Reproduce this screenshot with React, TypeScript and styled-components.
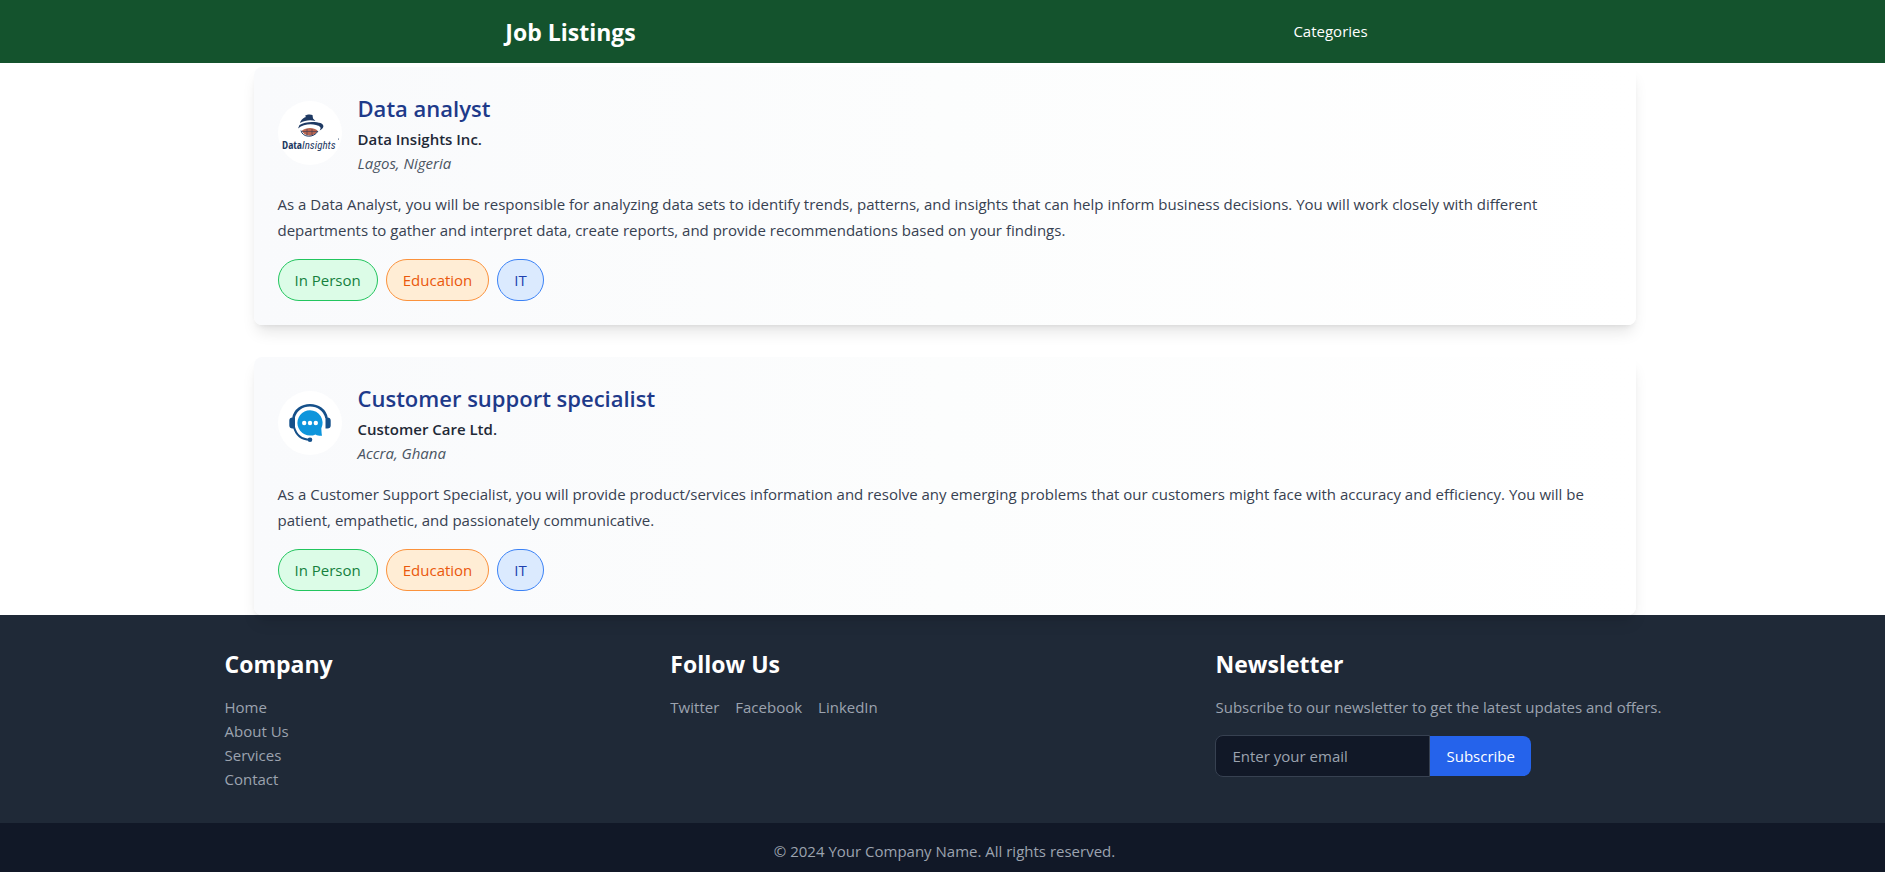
import React from 'react';
import styled, { createGlobalStyle } from 'styled-components';

const GlobalStyle = createGlobalStyle`
  *, *::before, *::after { box-sizing: border-box; }
  body {
    margin: 0;
    background: #ffffff;
    color: #111827;
    font-family: 'Segoe UI', 'Open Sans', 'Noto Sans', sans-serif;
    font-size: 15px;
    line-height: 24px;
  }
  h1, h2, h3, p, ul { margin: 0; padding: 0; }
  ul { list-style: none; }
  a { color: inherit; text-decoration: none; }
`;

const Page = styled.div`
  display: flex;
  flex-direction: column;
  min-height: 100vh;
`;

const Container = styled.div`
  width: 100%;
  max-width: 1536px;
  margin: 0 auto;
`;

const Header = styled.header`
  background: #14532d;
  color: #ffffff;
  padding: 15px 0 14px 4px;
`;

const HeaderRow = styled(Container)`
  display: flex;
  align-items: center;
  justify-content: space-around;
`;

const Brand = styled.h1`
  font-size: 23px;
  line-height: 34px;
  font-weight: 700;
`;

const Nav = styled.nav`
  padding: 0 16px 2px 0;
`;

const Main = styled.main`
  position: relative;
  z-index: 1;
  padding: 4px 0 0 4px;
`;

const JobList = styled(Container)`
  display: flex;
  flex-direction: column;
  gap: 32px;
  padding: 0 77px;
`;

const Card = styled.article`
  padding: 24px;
  border-radius: 8px;
  background: linear-gradient(to right, #f9fafc, #fcfdfd 50%, #ffffff);
  box-shadow: 0 10px 15px -3px rgba(0, 0, 0, 0.1), 0 4px 6px -4px rgba(0, 0, 0, 0.1);
`;

const CardHead = styled.div`
  display: flex;
  align-items: center;
  gap: 16px;
  margin-bottom: 16px;
`;

const Logo = styled.svg`
  flex: none;
  width: 64px;
  height: 64px;
  border-radius: 50%;
  background: #ffffff;
`;

const JobTitle = styled.h2`
  margin-bottom: 2px;
  font-size: 22px;
  line-height: 34px;
  font-weight: 600;
  color: #1e3a8a;
`;

const Employer = styled.p`
  font-weight: 600;
  color: #1f2937;
`;

const Place = styled.p`
  font-style: italic;
  color: #4b5563;
`;

const Description = styled.p`
  margin-bottom: 16px;
  line-height: 26px;
  color: #374151;
`;

const Tags = styled.div`
  display: flex;
  gap: 8px;
`;

const tones = {
  green: { text: '#15803d', line: '#22c55e', fill: '#dcfce7' },
  orange: { text: '#ea580c', line: '#fb923c', fill: '#ffedd5' },
  blue: { text: '#1e40af', line: '#3b82f6', fill: '#dbeafe' },
};

type Tone = keyof typeof tones;

const Tag = styled.span<{ $tone: Tone }>`
  padding: 8px 16px;
  border: 1px solid ${(p) => tones[p.$tone].line};
  border-radius: 21px;
  background: ${(p) => tones[p.$tone].fill};
  color: ${(p) => tones[p.$tone].text};
`;

const Footer = styled.footer`
  background: #1f2937;
  color: #9ca3af;
  padding: 32px 0 32px 4px;
`;

const FooterRow = styled(Container)`
  display: flex;
  justify-content: space-between;
  padding: 0 48px;
`;

const Newsletter = styled.section`
  min-width: 449px;
`;

const FooterTitle = styled.h3`
  margin-bottom: 14px;
  font-size: 23px;
  line-height: 34px;
  font-weight: 700;
  color: #ffffff;
`;

const SocialLinks = styled.div`
  display: flex;
  gap: 16px;
`;

const Form = styled.form`
  display: flex;
  align-items: center;
  margin-top: 16px;
`;

const EmailInput = styled.input`
  width: 215px;
  height: 42px;
  padding: 8px 16px;
  border: 1px solid #374151;
  border-radius: 8px 0 0 8px;
  background: #111827;
  color: #ffffff;
  font: inherit;
  &::placeholder { color: #9ca3af; opacity: 1; }
`;

const SubscribeButton = styled.button`
  padding: 8px 16px;
  border: 0;
  border-radius: 0 8px 8px 0;
  background: #2563eb;
  color: #ffffff;
  font: inherit;
`;

const Copyright = styled.div`
  flex: 1;
  padding: 16px 0 8px 4px;
  background: #111827;
  color: #9ca3af;
  text-align: center;
`;

const DataInsightsLogo = () => (
  <Logo viewBox="0 0 64 64" role="img" aria-label="Data Insights logo">
    <path d="M22.500 20.500C24 18 26 16.500 28 16L27 14.800C29 13.500 32 13 34.500 14L35 17.500L37.500 20C33 18.500 27 19 22 22Z" fill="#1f3a63" />
    <path d="M21.500 24C27 20 38 20.500 42.500 22C47 24 46 27.500 41.500 29.500C44 26.500 42 25 38 24C32 22.500 25 23.500 20 27.500Z" fill="#1f3a63" />
    <path d="M24 29.500C28 26 36 26 39.500 29.500C38.500 33 35 34.500 32 34.500C28 34.500 25 33 24 29.500Z" fill="#b9654f" />
    <path d="M24 30.500H39M29 28V34M34 28V34" stroke="#4d3f50" strokeWidth=".7" />
    <path d="M23 29.500C24 36.500 36 37.500 40 30" fill="none" stroke="#1f3a63" strokeWidth="1" />
    <text x="4" y="48" fontFamily="'Open Sans Condensed', 'Open Sans', sans-serif" fontSize="11" fill="#1f3a63">
      <tspan fontWeight="700">Data</tspan><tspan fontFamily="'Roboto Condensed', 'Open Sans Condensed', 'Open Sans', sans-serif" fontStyle="italic">Insights</tspan>
    </text>
    <circle cx="60.500" cy="38" r=".6" fill="#1f3a63" />
  </Logo>
);

const CustomerCareLogo = () => (
  <Logo viewBox="0 0 64 64" role="img" aria-label="Customer Care logo">
    <g fill="none" stroke="#15508a" strokeWidth="2.600">
      <path d="M15.500 27C17 19 24 14.300 32 14.300S47 19 48.500 27" />
      <path d="M16 36C18 44 24 48.500 32 48.800" strokeWidth="2" />
    </g>
    <path d="M17 26.500V37.500H14.500C12.500 37.500 11.300 36.500 11.300 34.500V29.500C11.300 27.500 12.500 26.500 14.500 26.500ZM47.500 26.500V37.500H49.500C51.500 37.500 52.700 36.500 52.700 34.500V29.500C52.700 27.500 51.500 26.500 49.500 26.500Z" fill="#15508a" />
    <circle cx="32" cy="48.800" r="2.300" fill="#15508a" />
    <path d="M32 19.200A12.700 12.700 0 1 0 37.500 43.400C40 44.800 42 45 44 44.700C43.500 42.500 43.600 40.500 43.300 37.500A12.700 12.700 0 0 0 32 19.200Z" fill="#0d95dc" />
    <circle cx="26.200" cy="32" r="2.200" fill="#fff" />
    <circle cx="32" cy="32" r="2.200" fill="#fff" />
    <circle cx="37.800" cy="32" r="2.200" fill="#fff" />
  </Logo>
);

const jobs = [
  {
    title: 'Data analyst',
    employer: 'Data Insights Inc.',
    place: 'Lagos, Nigeria',
    logo: <DataInsightsLogo />,
    description:
      'As a Data Analyst, you will be responsible for analyzing data sets to identify trends, patterns, and insights that can help inform business decisions. You will work closely with different departments to gather and interpret data, create reports, and provide recommendations based on your findings.',
  },
  {
    title: 'Customer support specialist',
    employer: 'Customer Care Ltd.',
    place: 'Accra, Ghana',
    logo: <CustomerCareLogo />,
    description:
      'As a Customer Support Specialist, you will provide product/services information and resolve any emerging problems that our customers might face with accuracy and efficiency. You will be patient, empathetic, and passionately communicative.',
  },
];

const tags: { label: string; tone: Tone }[] = [
  { label: 'In Person', tone: 'green' },
  { label: 'Education', tone: 'orange' },
  { label: 'IT', tone: 'blue' },
];

export default function App() {
  return (
    <Page>
      <GlobalStyle />
      <Header>
        <HeaderRow>
          <Brand>Job Listings</Brand>
          <Nav>
            <a href="#categories">Categories</a>
          </Nav>
        </HeaderRow>
      </Header>
      <Main>
        <JobList>
          {jobs.map((job) => (
            <Card key={job.title}>
              <CardHead>
                {job.logo}
                <div>
                  <JobTitle>{job.title}</JobTitle>
                  <Employer>{job.employer}</Employer>
                  <Place>{job.place}</Place>
                </div>
              </CardHead>
              <Description>{job.description}</Description>
              <Tags>
                {tags.map((tag) => (
                  <Tag key={tag.label} $tone={tag.tone}>{tag.label}</Tag>
                ))}
              </Tags>
            </Card>
          ))}
        </JobList>
      </Main>
      <Footer>
        <FooterRow>
          <section>
            <FooterTitle>Company</FooterTitle>
            <ul>
              {['Home', 'About Us', 'Services', 'Contact'].map((label) => (
                <li key={label}><a href="#company">{label}</a></li>
              ))}
            </ul>
          </section>
          <section>
            <FooterTitle>Follow Us</FooterTitle>
            <SocialLinks>
              {['Twitter', 'Facebook', 'LinkedIn'].map((label) => (
                <a key={label} href="#social">{label}</a>
              ))}
            </SocialLinks>
          </section>
          <Newsletter>
            <FooterTitle>Newsletter</FooterTitle>
            <p>Subscribe to our newsletter to get the latest updates and offers.</p>
            <Form onSubmit={(e) => e.preventDefault()}>
              <EmailInput type="email" placeholder="Enter your email" aria-label="Email" />
              <SubscribeButton type="submit">Subscribe</SubscribeButton>
            </Form>
          </Newsletter>
        </FooterRow>
      </Footer>
      <Copyright>© 2024 Your Company Name. All rights reserved.</Copyright>
    </Page>
  );
}
